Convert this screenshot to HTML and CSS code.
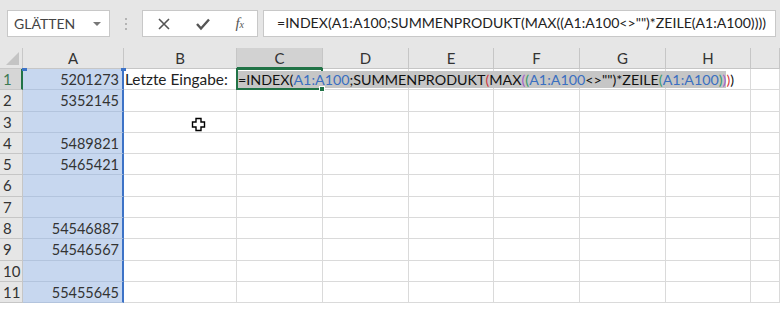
FILE: index.html
```html
<!DOCTYPE html>
<html lang="de">
<head>
  <meta charset="UTF-8">
  <title>Letzte Eingabe</title>
  <link rel="stylesheet" href="styles.css">
</head>
<body>
  <div class="toolbar">
    <div class="namebox">
      <span>GLÄTTEN</span>
      <span class="arrow"></span>
    </div>
    <div class="grip"><i></i><i></i><i></i></div>
    <div class="fbuttons">
      <svg class="ico" width="14" height="14" viewBox="0 0 14 14"><path d="M2 2 L12 12 M12 2 L2 12" stroke="#555" stroke-width="1.6" fill="none"/></svg>
      <svg class="ico" width="16" height="14" viewBox="0 0 16 14"><path d="M2 7 L6 11.5 L14 2.5" stroke="#555" stroke-width="2.4" fill="none"/></svg>
      <span class="fx">f<sub>x</sub></span>
    </div>
    <div class="formula">=INDEX(A1:A100;SUMMENPRODUKT(MAX((A1:A100&lt;&gt;"")*ZEILE(A1:A100))))</div>
  </div>

  <div class="sheet">
    <div class="corner"></div>
    <div class="colhead">A</div>
    <div class="colhead">B</div>
    <div class="colhead active">C</div>
    <div class="colhead">D</div>
    <div class="colhead">E</div>
    <div class="colhead">F</div>
    <div class="colhead">G</div>
    <div class="colhead">H</div>
    <div class="colhead"></div>

    <div class="rowhead active">1</div>
    <div class="cell a first">5201273</div>
    <div class="cell text">Letzte Eingabe:</div>
    <div class="cell edit">
      <span class="entry"><span class="sel">=INDEX(<b class="ref">A1:A100</b>;SUMMENPRODUKT<b class="p1">(</b>MAX<b class="p2">(</b><b class="p3">(</b><b class="ref">A1:A100</b>&lt;&gt;"")*ZEILE<b class="p3">(</b><b class="ref">A1:A100</b><b class="p3">)</b><b class="p2">)</b></span><b class="p1">)</b>)</span>
      <span class="handle"></span>
    </div>
    <div class="cell"></div><div class="cell"></div><div class="cell"></div><div class="cell"></div><div class="cell"></div><div class="cell"></div>

    <div class="rowhead">2</div>
    <div class="cell a">5352145</div>
    <div class="cell"></div><div class="cell"></div><div class="cell"></div><div class="cell"></div><div class="cell"></div><div class="cell"></div><div class="cell"></div><div class="cell"></div>

    <div class="rowhead">3</div>
    <div class="cell a"></div>
    <div class="cell cursor-cell">
      <svg class="cursor" width="15" height="15" viewBox="0 0 15 15"><path d="M5 1.5 H10 V5 H13.5 V10 H10 V13.5 H5 V10 H1.5 V5 H5 Z" fill="#fff" stroke="#000" stroke-width="1.4"/></svg>
    </div>
    <div class="cell"></div><div class="cell"></div><div class="cell"></div><div class="cell"></div><div class="cell"></div><div class="cell"></div><div class="cell"></div>

    <div class="rowhead">4</div>
    <div class="cell a">5489821</div>
    <div class="cell"></div><div class="cell"></div><div class="cell"></div><div class="cell"></div><div class="cell"></div><div class="cell"></div><div class="cell"></div><div class="cell"></div>

    <div class="rowhead">5</div>
    <div class="cell a">5465421</div>
    <div class="cell"></div><div class="cell"></div><div class="cell"></div><div class="cell"></div><div class="cell"></div><div class="cell"></div><div class="cell"></div><div class="cell"></div>

    <div class="rowhead">6</div>
    <div class="cell a"></div>
    <div class="cell"></div><div class="cell"></div><div class="cell"></div><div class="cell"></div><div class="cell"></div><div class="cell"></div><div class="cell"></div><div class="cell"></div>

    <div class="rowhead">7</div>
    <div class="cell a"></div>
    <div class="cell"></div><div class="cell"></div><div class="cell"></div><div class="cell"></div><div class="cell"></div><div class="cell"></div><div class="cell"></div><div class="cell"></div>

    <div class="rowhead">8</div>
    <div class="cell a">54546887</div>
    <div class="cell"></div><div class="cell"></div><div class="cell"></div><div class="cell"></div><div class="cell"></div><div class="cell"></div><div class="cell"></div><div class="cell"></div>

    <div class="rowhead">9</div>
    <div class="cell a">54546567</div>
    <div class="cell"></div><div class="cell"></div><div class="cell"></div><div class="cell"></div><div class="cell"></div><div class="cell"></div><div class="cell"></div><div class="cell"></div>

    <div class="rowhead">10</div>
    <div class="cell a"></div>
    <div class="cell"></div><div class="cell"></div><div class="cell"></div><div class="cell"></div><div class="cell"></div><div class="cell"></div><div class="cell"></div><div class="cell"></div>

    <div class="rowhead">11</div>
    <div class="cell a">55455645</div>
    <div class="cell"></div><div class="cell"></div><div class="cell"></div><div class="cell"></div><div class="cell"></div><div class="cell"></div><div class="cell"></div><div class="cell"></div>
  </div>
</body>
</html>
```

FILE: styles.css
```css
* {
  box-sizing: border-box;
}

body {
  margin: 0;
  width: 780px;
  height: 309px;
  overflow: hidden;
  background: #e6e6e6;
  font-family: Lato, "Liberation Sans", sans-serif;
  color: #222;
}

/* formula bar */
.toolbar {
  display: flex;
  align-items: center;
  height: 48px;
  padding: 10px 4px 11px 7px;
}

.namebox {
  display: flex;
  align-items: center;
  justify-content: space-between;
  width: 103px;
  height: 27px;
  background: #fff;
  border: 1px solid #c8c8c8;
  padding: 0 8px 0 6px;
  font-size: 14px;
  color: #444;
}

.arrow {
  width: 0;
  height: 0;
  border-left: 4px solid transparent;
  border-right: 4px solid transparent;
  border-top: 4px solid #777;
}

.grip {
  display: flex;
  flex-direction: column;
  gap: 3px;
  width: 32px;
  align-items: center;
}

.grip i {
  width: 2px;
  height: 2px;
  background: #b4b4b4;
}

.fbuttons {
  display: flex;
  align-items: center;
  justify-content: space-between;
  width: 116px;
  height: 27px;
  background: #fff;
  border: 1px solid #c8c8c8;
  padding: 0 13px 0 14px;
}

.fx {
  font-family: "Liberation Serif", serif;
  font-style: italic;
  font-size: 15px;
  color: #555;
}

.fx sub {
  font-size: 10px;
  vertical-align: 0;
}

.formula {
  flex: 1;
  height: 27px;
  margin-left: 5px;
  background: #fff;
  border: 1px solid #c8c8c8;
  padding: 3px 0 0 13px;
  font-size: 14.1px;
  white-space: nowrap;
  overflow: hidden;
}

/* sheet grid */
.sheet {
  display: grid;
  grid-template-columns: 23px 101px 113px 86px 86px 85px 86px 86px 85px 1fr;
  grid-template-rows: 21px repeat(11, 21.3px);
  background: #fff;
  height: 261px;
}

.corner {
  background: #e6e6e6;
  border-right: 1px solid #c8c8c8;
  border-bottom: 1px solid #c8c8c8;
  position: relative;
}

.corner::after {
  content: "";
  position: absolute;
  right: 3px;
  bottom: 3px;
  border-left: 13px solid transparent;
  border-bottom: 13px solid #c4c4c4;
}

.colhead {
  background: #e6e6e6;
  border-right: 1px solid #c6c6c6;
  border-bottom: 1px solid #c6c6c6;
  text-align: center;
  font-size: 15px;
  line-height: 20px;
  color: #333;
}

.colhead.active {
  background: #d2d2d2;
  border-bottom: 2px solid #217346;
}

.rowhead {
  background: #e6e6e6;
  border-right: 1px solid #c6c6c6;
  border-bottom: 1px solid #c6c6c6;
  font-size: 15px;
  padding-left: 3px;
  line-height: 21px;
  color: #333;
}

.rowhead.active {
  background: #d6d6d6;
  color: #3c7a52;
  border-right: 2px solid #217346;
}

.cell {
  border-right: 1px solid #dadada;
  border-bottom: 1px solid #dadada;
  font-size: 15px;
  line-height: 21px;
  white-space: nowrap;
}

.cell.a {
  background: #c7d7ef;
  border-right: 2px solid #3d73c7;
  border-bottom-color: #b3c4dd;
  text-align: right;
  padding-right: 3px;
  font-size: 14.5px;
  color: #333;
}

.cell.first {
  position: relative;
}

.cell.first::before,
.cell.first::after {
  content: "";
  position: absolute;
  top: -1px;
  width: 5px;
  height: 3px;
  background: #3d73c7;
}

.cell.first::before {
  left: -1px;
}

.cell.first::after {
  right: -4px;
}

.cell.text {
  padding-left: 1px;
  font-size: 15.4px;
}

.cell.edit {
  position: relative;
  border: 2px solid #217346;
  margin: -1px 0 0 -1px;
}

.entry {
  position: absolute;
  left: 0;
  top: 0;
  line-height: 19px;
  font-size: 14.3px;
  white-space: nowrap;
  color: #111;
}

.sel {
  background: #c6c6c6;
}

.entry b {
  font-weight: normal;
}

.entry .ref {
  color: #3a6fc0;
}

.entry .p1 {
  color: #d2383c;
}

.entry .p2 {
  color: #a25ec9;
}

.entry .p3 {
  color: #3a9a6a;
}

.handle {
  position: absolute;
  right: -4px;
  bottom: -4px;
  width: 6px;
  height: 6px;
  background: #217346;
  border: 1px solid #fff;
}

.cursor-cell {
  position: relative;
}

.cursor {
  position: absolute;
  left: 67px;
  top: 5px;
}
```
